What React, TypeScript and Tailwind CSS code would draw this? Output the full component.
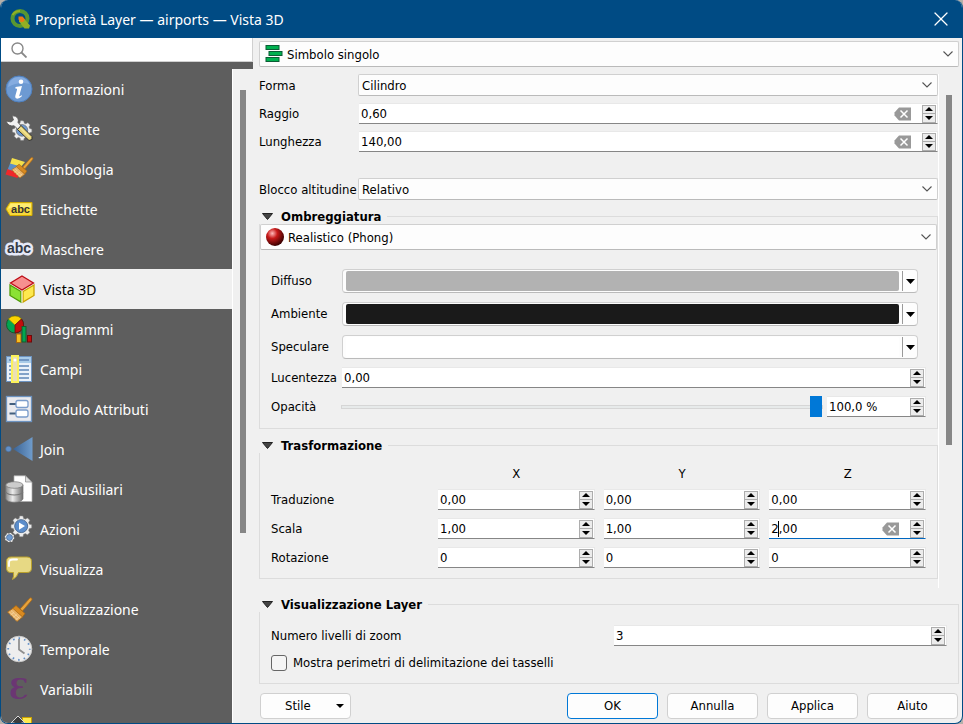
import { useState } from "react";
import type { ReactNode } from "react";
import { X } from "lucide-react";

const gearPath =
  "M12 1l2 .2.7 2.7 2 .8 2.4-1.4 2.6 2.6-1.4 2.4.8 2 2.7.7v3.6l-2.7.7-.8 2 1.4 2.4-2.6 2.6-2.4-1.4-2 .8-.7 2.7h-3.6l-.7-2.7-2-.8-2.4 1.4-2.6-2.6 1.4-2.4-.8-2L.6 14.6V11l2.7-.7.8-2-1.4-2.4 2.6-2.6 2.4 1.4 2-.8L10.4 1z";

function Icon({ children }: { children: ReactNode }) {
  return (
    <svg viewBox="0 0 28 28" className="h-7 w-7 shrink-0 overflow-visible" aria-hidden="true">
      {children}
    </svg>
  );
}

const brush = (
  <>
    <path d="M15 14L24.5 3.5q1.4-1.2 2.2-.2.8 1-.3 2.2L17.500 16z" fill="#e8a33c" stroke="#b06a10" strokeWidth=".8" />
    <path d="M11 10.500l9 8-2.500 3.500-10-8.500z" fill="#d98a20" stroke="#a8660f" strokeWidth=".7" />
    <path d="M8 13.500l9.500 8.500-5.500 4.500L2.500 17z" fill="#e9b266" stroke="#b06a10" strokeWidth=".7" />
    <path d="M6 15.500l8.500 8M4.500 17l8 8M9 17.500l-3.500 2.500M12 19.500l-4 2.800M14.500 22l-4 2.800" stroke="#f6d9a6" strokeWidth=".7" fill="none" />
  </>
);

const icons: Record<string, ReactNode> = {
  info: (
    <Icon>
      <circle cx="14" cy="14" r="13" fill="#6d9ad2" stroke="#4f80bf" />
      <path d="M3 12C4 5 9 2 14 2s9 3 10.500 7C18 7 10 8 3 12z" fill="#85ace0" />
      <circle cx="16" cy="6.800" r="2.300" fill="#fff" />
      <path d="M10.500 12l6.500-1-2.700 9.500q-.4 1.500 2.200-.3l.6.8q-3 3-5.400 2.600-2-.4-1.300-3l1.700-6q.2-1.200-1.800-1z" fill="#fff" />
    </Icon>
  ),
  source: (
    <Icon>
      <g transform="translate(7 5) scale(.83)">
        <path d={gearPath} fill="#eee" stroke="#999" strokeWidth=".6" />
        <circle cx="12" cy="12.500" r="7" fill="#6d9ad2" stroke="#777" />
      </g>
      <path d="M1 6l5 1 2.500-2L7 .8q4-.5 5.800 2.500 1 2 .2 4.200l4 4.500-3.500 3-4.300-4.300Q3.500 12 1 6z" fill="#f2f2f2" stroke="#555" strokeWidth=".8" />
      <path d="M16 10.500l11 11v3l-3 1-11.500-11z" fill="#e6d377" stroke="#333" />
      <path d="M15.500 13l9.500 9.500" stroke="#fff3ac" />
    </Icon>
  ),
  symbology: (
    <Icon>
      <path d="M7 3l13 4-5 6L5 9z" fill="#f5e04a" />
      <path d="M5 8.500l11 3-2 7L2.500 15z" fill="#5b8fc9" />
      <path d="M2.500 14l12 4.500-2 4.500L.5 19.500z" fill="#f0282a" />
      <g transform="translate(4.500 0) scale(.87)">{brush}</g>
    </Icon>
  ),
  labels: (
    <Icon>
      <path d="M1 14l4-6.500h22v13H5z" fill="#f7d93c" stroke="#d2ab00" />
      <path d="M3 13.500L5.800 8.500H26v4z" fill="#ffed72" />
      <text x="15.500" y="17.500" textAnchor="middle" fontSize="11" fontWeight="bold" fontFamily="Liberation Sans, sans-serif" fill="#333">abc</text>
    </Icon>
  ),
  masks: (
    <Icon>
      <text x="14" y="17.500" textAnchor="middle" fontSize="14" fontWeight="bold" fontFamily="Liberation Sans, sans-serif" fill="#343a45" stroke="#e6e9f8" strokeWidth="5" strokeLinejoin="round" paintOrder="stroke">abc</text>
    </Icon>
  ),
  cube: (
    <Icon>
      <path d="M14 1L25.500 8 14 15 2.500 8z" fill="#f79090" stroke="#bd0a14" strokeWidth="1.300" />
      <path d="M2 10L13 16.500v10.500L2 20.500z" fill="#8be234" stroke="#4f9a06" strokeWidth="1.300" />
      <path d="M26 10L15 16.500v10.500l11-6.500z" fill="#fde94f" stroke="#c9a000" strokeWidth="1.300" />
      <path d="M14 16v11.500" stroke="#f8f3c8" />
    </Icon>
  ),
  diagrams: (
    <Icon>
      <circle cx="10" cy="9.500" r="8.500" fill="#00a651" stroke="#165a2c" />
      <path d="M10 10L3.500 4Q6 1 10 1t6.500 3z" fill="#fbd300" stroke="#b08c00" strokeWidth=".7" />
      <path d="M10 10l6.500-6Q19 7 18.500 11q-1 6-8.500 7z" fill="#c40d0d" stroke="#6d0a0a" strokeWidth=".8" />
      <rect x="11.500" y="19" width="4.500" height="8.500" fill="#f6bf22" stroke="#a8660f" />
      <rect x="17" y="11.500" width="4" height="15.500" fill="#00a651" stroke="#165a2c" />
      <rect x="22.500" y="20.500" width="4" height="6.500" fill="#c40d0d" stroke="#6d0a0a" />
    </Icon>
  ),
  fields: (
    <Icon>
      <rect x="1.500" y="1.500" width="25" height="25" fill="#eaf1f9" stroke="#6d93c0" />
      <rect x="2" y="2" width="24" height="6" fill="#a9cbe8" />
      <path d="M4 5h4M14 5h10M4 11h4M14 11h10M4 15h4M14 15h10M4 19h4M14 19h10M4 23h4M14 23h10" stroke="#5f86b8" strokeWidth="1.300" />
      <rect x="7" y="1" width="6" height="26" fill="#ece0b4" stroke="#fcf25a" strokeWidth="2" />
      <circle cx="10" cy="5" r="1.500" fill="#fff" />
    </Icon>
  ),
  form: (
    <Icon>
      <rect x="1.500" y="1.500" width="25" height="25" fill="#eaeaee" stroke="#6d93c0" strokeWidth="1.300" />
      <path d="M4.500 9H11M4.500 18.500H11" stroke="#44607f" strokeWidth="2" />
      <rect x="11" y="5.500" width="12" height="7" rx="2" fill="#fff" stroke="#7a9ccb" strokeWidth="1.300" />
      <rect x="11" y="15" width="12" height="7" rx="2" fill="#fff" stroke="#7a9ccb" strokeWidth="1.300" />
    </Icon>
  ),
  join: (
    <Icon>
      <defs>
        <linearGradient id="joinFill">
          <stop offset="0" stopColor="#3b6394" />
          <stop offset="1" stopColor="#6f9ccc" />
        </linearGradient>
      </defs>
      <circle cx="3.500" cy="14" r="2.800" fill="#6290c8" stroke="#466f9f" strokeWidth=".6" />
      <path d="M8 14L27.500 2v24z" fill="url(#joinFill)" />
    </Icon>
  ),
  auxiliary: (
    <Icon>
      <defs>
        <linearGradient id="dbFill">
          <stop offset="0" stopColor="#8a8a8a" />
          <stop offset=".4" stopColor="#ececec" />
          <stop offset="1" stopColor="#6c6c6c" />
        </linearGradient>
      </defs>
      <path d="M9 .8h11.500L27 7v19.500H9z" fill="#fff" stroke="#aaa" strokeWidth=".7" />
      <path d="M20.500.8V7H27z" fill="#ddd" stroke="#777" strokeWidth=".6" />
      <path d="M.8 10v14q1.500 3.200 8.500 3.200T18 24V10z" fill="url(#dbFill)" stroke="#777" strokeWidth=".7" />
      <path d="M.8 17q2 3 8.500 3T18 17" fill="none" stroke="#777" strokeWidth="1.200" />
      <ellipse cx="9.400" cy="10" rx="8.600" ry="3.300" fill="#ccc" stroke="#777" strokeWidth=".7" />
    </Icon>
  ),
  actions: (
    <Icon>
      <g transform="translate(5.500 0) scale(.89)">
        <path d={gearPath} fill="#ececec" stroke="#888" strokeWidth=".6" />
        <circle cx="12" cy="12.500" r="7.300" fill="#5b8dcb" stroke="#47678f" />
      </g>
      <path d="M14 7.500l6 3.600-6 3.600z" fill="#fff" />
      <circle cx="4.500" cy="22.500" r="4" fill="#eee" stroke="#eee" strokeDasharray="1.600 1.500" strokeWidth="1.500" />
      <circle cx="4.500" cy="22.500" r="3" fill="#6d9ad2" stroke="#47678f" strokeWidth=".7" />
    </Icon>
  ),
  tips: (
    <Icon>
      <path d="M6 2h16q4.500 0 4.500 4.500V13q0 4.500-4.500 4.500h-8.500Q12 22.500 7.500 24.500q1.700-3.500 1-7H6q-4.500 0-4.500-4.500V6.500Q1.500 2 6 2z" fill="#e7d984" stroke="#b9a02c" />
      <path d="M4 11V8q0-3.500 4-3.500h4" fill="none" stroke="#fff" strokeWidth="1.800" strokeLinecap="round" />
    </Icon>
  ),
  rendering: <Icon>{brush}</Icon>,
  temporal: (
    <Icon>
      <circle cx="14" cy="14" r="12.800" fill="#eee" stroke="#c9c9c9" />
      <circle cx="14" cy="14" r="10.800" fill="none" stroke="#6290c8" strokeWidth="1.800" strokeDasharray="1.600 4.055" strokeDashoffset=".8" />
      <path d="M14 4v10.500l5.500 4" fill="none" stroke="#8f8f8f" strokeWidth="1.800" />
    </Icon>
  ),
  variables: (
    <Icon>
      <text x="14" y="23.500" textAnchor="middle" fontSize="27" fontWeight="bold" fontFamily="DejaVu Serif, serif" fill="#6b3673">Ɛ</text>
    </Icon>
  ),
  metadata: (
    <Icon>
      <rect x="17.500" y="2.500" width="9" height="20" fill="#fde94f" stroke="#c9a000" />
      <path d="M13 1l7 7h-3.500v13h-7V8H6z" fill="#3c3c3c" stroke="#d8d8d8" />
    </Icon>
  ),
};

const pages = [
  { label: "Informazioni", icon: "info" },
  { label: "Sorgente", icon: "source" },
  { label: "Simbologia", icon: "symbology" },
  { label: "Etichette", icon: "labels" },
  { label: "Maschere", icon: "masks" },
  { label: "Vista 3D", icon: "cube" },
  { label: "Diagrammi", icon: "diagrams" },
  { label: "Campi", icon: "fields" },
  { label: "Modulo Attributi", icon: "form" },
  { label: "Join", icon: "join" },
  { label: "Dati Ausiliari", icon: "auxiliary" },
  { label: "Azioni", icon: "actions" },
  { label: "Visualizza", icon: "tips" },
  { label: "Visualizzazione", icon: "rendering" },
  { label: "Temporale", icon: "temporal" },
  { label: "Variabili", icon: "variables" },
  { label: "", icon: "metadata" },
];

const transformRows = [
  { label: "Traduzione", values: ["0,00", "0,00", "0,00"] },
  { label: "Scala", values: ["1,00", "1,00", "2,00"] },
  { label: "Rotazione", values: ["0", "0", "0"] },
];

function Combo({ label, id, value, icon, tall }: { label?: string; id?: string; value: string; icon?: ReactNode; tall?: boolean }) {
  return (
    <div className={`relative min-w-0 flex-1 ${tall ? "h-[26px]" : "h-[22px]"}`}>
      <select
        id={id}
        aria-label={label}
        className={`h-full w-full appearance-none rounded-xs border border-[#d0d0d0] border-b-[#bababa] bg-[#fdfdfd] pt-0.5 outline-none ${icon ? "pl-[27px]" : "pl-[3px]"}`}
      >
        <option>{value}</option>
      </select>
      {icon && <span className="pointer-events-none absolute inset-y-0 left-1.5 flex items-center">{icon}</span>}
      <span className="pointer-events-none absolute inset-y-0 right-1.5 flex items-center">
        <svg width="10" height="6" viewBox="0 0 10 6" aria-hidden="true">
          <path d="M.5.5L5 5 9.500.5" fill="none" stroke="#555" strokeWidth="1.100" />
        </svg>
      </span>
    </div>
  );
}

function Spin({ id, label, value, clearable, active }: { id?: string; label?: string; value: string; clearable?: boolean; active?: boolean }) {
  return (
    <div
      className={`relative flex h-[21px] min-w-0 flex-1 items-center border-t border-r border-b border-t-[#e8e8e8] border-r-[#e8e8e8] bg-white pr-px ${active ? "border-b-[#0067c0]" : "border-b-[#868686]"}`}
    >
      <input id={id} aria-label={label} type="text" defaultValue={value} className="h-full w-0 min-w-0 flex-1 bg-transparent pl-0.5 outline-none" />
      {active && <span className="absolute top-0.5 left-[9px] h-4 w-px bg-black" />}
      {clearable && (
        <button aria-label="Cancella" className="mr-2.5 shrink-0">
          <svg width="18" height="14" viewBox="0 0 18 14" aria-hidden="true">
            <path d="M5 .5h12v13H5L.5 8.500v-3z" fill="#999" />
            <path d="M6.500 3.500l7 7M13.500 3.500l-7 7" stroke="#fff" strokeWidth="1.500" />
          </svg>
        </button>
      )}
      <div className="flex h-[18px] w-3.5 shrink-0 flex-col divide-y divide-[#adadad] border border-[#adadad] bg-[#ececec]">
        <button aria-label="Aumenta" className="flex flex-1 items-center justify-center">
          <svg width="8" height="4" viewBox="0 0 8 4" aria-hidden="true">
            <path d="M0 4L4 0l4 4z" />
          </svg>
        </button>
        <button aria-label="Diminuisci" className="flex flex-1 items-center justify-center">
          <svg width="8" height="4" viewBox="0 0 8 4" aria-hidden="true">
            <path d="M0 0l4 4 4-4z" />
          </svg>
        </button>
      </div>
    </div>
  );
}

function Group({ title, children }: { title: string; children: ReactNode }) {
  return (
    <fieldset className="min-w-0 border border-[#dcdcdc]">
      <legend className="-ml-px flex h-4 items-center gap-2 pr-1.5 pl-[3px] font-bold">
        <svg width="11" height="7" viewBox="0 0 11 7" aria-hidden="true">
          <path d="M.5.5h10L5.500 6.500z" fill="#444" stroke="#222" />
        </svg>
        <span className="pt-0.5">{title}</span>
      </legend>
      {children}
    </fieldset>
  );
}

function ColorRow({ label, swatch }: { label: string; swatch: string }) {
  return (
    <div className="flex items-center">
      <span className="w-[71px] shrink-0">{label}</span>
      <div className="mr-2 flex h-6 min-w-0 flex-1 rounded-sm border border-[#d0d0d0] border-b-[#bababa] bg-[#fdfdfd]">
        <button aria-label={label} className="flex min-w-0 flex-1 py-px pr-[3px] pl-[3px]">
          <span className={`h-full flex-1 rounded-xs ${swatch}`} />
        </button>
        <button aria-label={`${label}: menu`} className="my-px flex w-[15px] items-center justify-center border-l border-[#9a9a9a]">
          <svg width="9" height="5" viewBox="0 0 9 5" aria-hidden="true">
            <path d="M0 0h9L4.500 5z" />
          </svg>
        </button>
      </div>
    </div>
  );
}

export default function App() {
  const [selected, setSelected] = useState("Vista 3D");
  const [bounds, setBounds] = useState(false);

  const dialogButton = "h-[26px] w-[91px] rounded-sm border bg-[#fdfdfd]";

  return (
    <div className="h-screen bg-[#b5b0aa]">
      <div className="flex h-full flex-col overflow-hidden rounded-lg border-x border-b border-[#004b84] bg-[#f0f0f0] font-['DejaVu_Sans_Condensed','DejaVu_Sans',sans-serif] text-[13px] leading-4 text-black">
        {/* Title bar */}
        <header className="flex h-[38px] shrink-0 items-center bg-[#004b84] pr-[9px] pl-2 font-['Noto_Sans',sans-serif] text-white">
          <svg width="22" height="22" viewBox="0 0 22 22" className="mr-1" aria-hidden="true">
            <circle cx="11" cy="10.500" r="7.500" fill="none" stroke="#589632" strokeWidth="4" />
            <path d="M3.500 7Q6 3 11 3" fill="none" stroke="#93b023" strokeWidth="2" />
            <path d="M10 9.500h4l7 8-1 3h-4.500l-5.500-7z" fill="#93b023" />
            <path d="M9.500 8.500h4l2.500 3-2 2.500h-2l-2.500-2.500z" fill="#ee7913" />
          </svg>
          <h1 className="flex-1 pt-0.5 text-[14px] leading-5">Proprietà Layer — airports — Vista 3D</h1>
          <button aria-label="Chiudi">
            <X size={24} strokeWidth={1.2} />
          </button>
        </header>

        <div className="flex min-h-0 flex-1">
          {/* Sidebar */}
          <aside className="flex w-[252px] shrink-0 flex-col">
            <div className="flex h-6 shrink-0 items-center border-r border-b border-[#d0d0d0] bg-white pl-2.5">
              <svg width="16" height="16" viewBox="0 0 16 16" aria-hidden="true">
                <circle cx="6.500" cy="6.500" r="5.500" fill="none" stroke="#888" strokeWidth="1.400" />
                <path d="M10.500 10.500l5 5" stroke="#888" strokeWidth="1.800" />
              </svg>
              <input type="text" aria-label="Cerca" className="h-full min-w-0 flex-1 px-2 outline-none" />
            </div>
            <div className="h-[7px] shrink-0 bg-[#5e5e5e]" />
            <div className="flex min-h-0 flex-1">
              <nav className="min-w-0 flex-1 overflow-hidden bg-[#5e5e5e] font-['Noto_Sans',sans-serif] text-[14px] leading-5 text-white">
                {pages.map((page) => (
                  <button
                    key={page.icon}
                    aria-label={page.label || "Metadati"}
                    onClick={() => setSelected(page.label)}
                    className={`flex h-10 w-full items-center gap-[7px] text-left ${selected === page.label ? "bg-[#f0f0f0] pl-[7px] text-black" : "pl-1"}`}
                  >
                    {icons[page.icon]}
                    <span className="pt-0.5">{page.label}</span>
                  </button>
                ))}
              </nav>
              <div className="flex w-[21px] shrink-0 border-l border-white pt-[21px] pl-[7px]">
                <div className="h-[70%] w-1.5 bg-[#868686]" />
              </div>
            </div>
          </aside>

          {/* 3D view settings */}
          <main className="flex min-w-0 flex-1 flex-col pt-[3px] pr-[3px] pl-1.5">
            <div className="flex shrink-0">
              <Combo
                label="Tipo di simbolo"
                value="Simbolo singolo"
                tall
                icon={
                  <svg width="18" height="18" viewBox="0 0 18 18" aria-hidden="true">
                    <g fill="#00b04f" stroke="#0b5c35">
                      <rect x="1" y=".5" width="13" height="4" />
                      <rect x="4" y="6.500" width="13" height="4" />
                      <rect x="1" y="12.500" width="13" height="4" />
                    </g>
                  </svg>
                }
              />
            </div>

            <div className="mt-[7px] flex shrink-0">
              <div className="min-w-0 flex-1 border-r border-white pb-[9px]">
                <div className="flex flex-col gap-[7px]">
                  <div className="flex items-center">
                    <label htmlFor="shape" className="w-[99px] pt-0.5">Forma</label>
                    <Combo id="shape" value="Cilindro" />
                  </div>
                  <div className="flex items-center">
                    <label htmlFor="radius" className="w-[100px]">Raggio</label>
                    <Spin id="radius" value="0,60" clearable />
                  </div>
                  <div className="flex items-center">
                    <label htmlFor="length" className="w-[100px]">Lunghezza</label>
                    <Spin id="length" value="140,00" clearable />
                  </div>
                  <div className="mt-[19px] flex items-center">
                    <label htmlFor="clamping" className="w-[99px] pt-0.5 whitespace-nowrap">Blocco altitudine</label>
                    <Combo id="clamping" value="Relativo" />
                  </div>
                </div>

                <div className="mt-2 flex flex-col gap-2">
                  <Group title="Ombreggiatura">
                    <div className="flex">
                      <Combo
                        label="Ombreggiatura"
                        value="Realistico (Phong)"
                        tall
                        icon={
                          <svg width="18" height="18" viewBox="0 0 18 18" aria-hidden="true">
                            <defs>
                              <radialGradient id="ball" cx=".35" cy=".3" r=".7">
                                <stop offset="0" stopColor="#fbb" />
                                <stop offset=".4" stopColor="#c81a1a" />
                                <stop offset="1" stopColor="#3c0000" />
                              </radialGradient>
                            </defs>
                            <circle cx="9" cy="9" r="9" fill="url(#ball)" />
                          </svg>
                        }
                      />
                    </div>
                    <div className="flex flex-col gap-2 pt-[19px] pr-[11px] pb-[11px] pl-[11px]">
                      <div className="flex flex-col gap-[9px]">
                        <ColorRow label="Diffuso" swatch="bg-[#b2b2b2]" />
                        <ColorRow label="Ambiente" swatch="bg-[#1a1a1a]" />
                        <ColorRow label="Speculare" swatch="bg-white" />
                      </div>
                      <div className="flex items-center">
                        <label htmlFor="shininess" className="w-[71px]">Lucentezza</label>
                        <Spin id="shininess" value="0,00" />
                      </div>
                      <div className="flex items-center">
                        <label htmlFor="opacity" className="w-[70px]">Opacità</label>
                        <input
                          id="opacity"
                          type="range"
                          defaultValue={100}
                          className="mr-1 h-[21px] min-w-0 flex-1 appearance-none bg-transparent [&::-webkit-slider-runnable-track]:h-1 [&::-webkit-slider-runnable-track]:border [&::-webkit-slider-runnable-track]:border-[#d6d6d6] [&::-webkit-slider-runnable-track]:bg-[#e7eaea] [&::-webkit-slider-thumb]:-mt-2.5 [&::-webkit-slider-thumb]:h-[21px] [&::-webkit-slider-thumb]:w-3 [&::-webkit-slider-thumb]:appearance-none [&::-webkit-slider-thumb]:bg-[#0078d7]"
                        />
                        <div className="flex w-[99px]">
                          <Spin label="Opacità in percentuale" value="100,0 %" />
                        </div>
                      </div>
                    </div>
                  </Group>

                  <Group title="Trasformazione">
                    <div className="grid grid-cols-[158px_1fr_1fr_1fr] items-center gap-x-[9px] gap-y-2 pt-3 pr-[11px] pb-2.5 pl-[11px]">
                      <span />
                      {["X", "Y", "Z"].map((axis) => (
                        <span key={axis} className="h-4 pt-px text-center">{axis}</span>
                      ))}
                      {transformRows.map((row) => (
                        <div key={row.label} className="contents">
                          <span>{row.label}</span>
                          {row.values.map((value, i) => (
                            <Spin
                              key={i}
                              label={`${row.label} ${"XYZ"[i]}`}
                              value={value}
                              clearable={value === "2,00"}
                              active={value === "2,00"}
                            />
                          ))}
                        </div>
                      ))}
                    </div>
                  </Group>
                </div>
              </div>
              <div className="w-5 shrink-0 pt-[21px] pl-[7px]">
                <div className="h-[71%] w-1.5 bg-[#868686]" />
              </div>
            </div>

            <div className="mt-2 shrink-0">
              <Group title="Visualizzazione Layer">
                <div className="flex flex-col gap-[9px] pt-[13px] pr-[11px] pb-3 pl-[11px]">
                  <div className="flex items-center">
                    <label htmlFor="zoom" className="w-[343px]">Numero livelli di zoom</label>
                    <Spin id="zoom" value="3" />
                  </div>
                  <label className="flex items-center gap-1.5">
                    <input
                      type="checkbox"
                      checked={bounds}
                      onChange={(e) => setBounds(e.target.checked)}
                      className="h-4 w-4 appearance-none rounded-[3px] border border-[#666] bg-[#f5f5f5] checked:bg-[#0067c0]"
                    />
                    Mostra perimetri di delimitazione dei tasselli
                  </label>
                </div>
              </Group>
            </div>

            {/* Dialog buttons */}
            <footer className="mt-auto flex shrink-0 gap-[9px] pr-px pb-1 pl-px">
              <button className={`${dialogButton} mr-auto flex items-center justify-between border-[#d0d0d0] pr-1.5 pl-6`}>
                Stile
                <svg width="8" height="4" viewBox="0 0 8 4" aria-hidden="true">
                  <path d="M0 0h8L4 4z" />
                </svg>
              </button>
              <button className={`${dialogButton} border-[#0078d7]`}>OK</button>
              <button className={`${dialogButton} border-[#d0d0d0]`}>Annulla</button>
              <button className={`${dialogButton} border-[#d0d0d0]`}>Applica</button>
              <button className={`${dialogButton} border-[#d0d0d0]`}>Aiuto</button>
            </footer>
          </main>
        </div>
      </div>
    </div>
  );
}
